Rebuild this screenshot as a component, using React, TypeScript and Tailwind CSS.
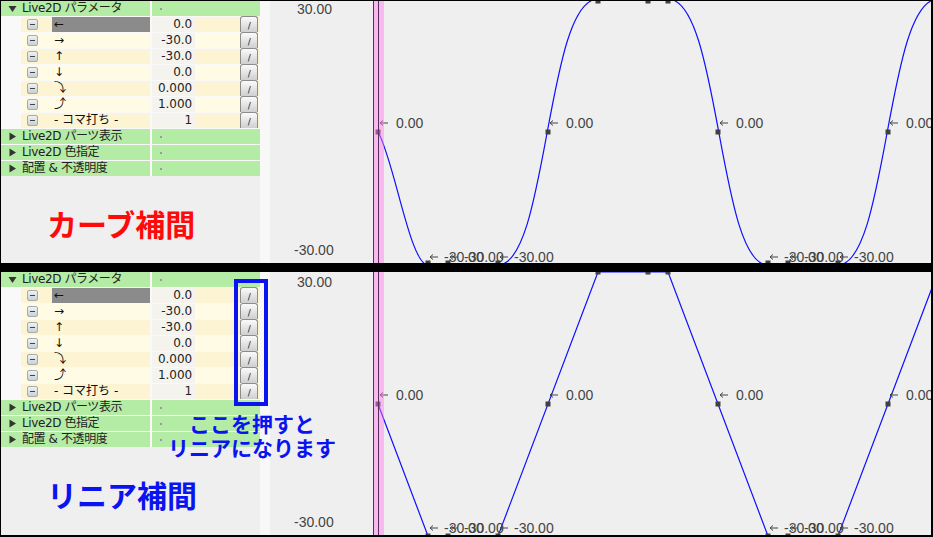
import React from 'react';

type Mode = 'curve' | 'linear';

const params = [
  { label: '←', value: '0.0' },
  { label: '→', value: '-30.0' },
  { label: '↑', value: '-30.0' },
  { label: '↓', value: '0.0' },
  { label: '⤵', value: '0.000' },
  { label: '⤴', value: '1.000' },
  { label: '- コマ打ち -', value: '1' },
];

const groups = ['Live2D パーツ表示', 'Live2D 色指定', '配置 & 不透明度'];

function Triangle({ open }: { open: boolean }) {
  return (
    <svg width="9" height="9" viewBox="0 0 9 9" className="ml-[7px] mr-[5px] shrink-0">
      {open ? <path d="M0.5 2 L8.5 2 L4.5 8 Z" fill="#333" /> : <path d="M1.5 0.5 L8 4.5 L1.5 8.5 Z" fill="#333" />}
    </svg>
  );
}

function GroupHeader({ title, open }: { title: string; open: boolean }) {
  return (
    <div className="mb-px flex h-[15px]">
      <div className="flex w-[150px] items-center bg-[#b4eba5]">
        <Triangle open={open} />
        <span className="whitespace-pre text-[12px] leading-[15px] text-[#222] font-['DejaVu_Sans','Noto_Sans_CJK_JP',sans-serif] tracking-[-0.4px]">
          {title}
        </span>
      </div>
      <div className="ml-[2px] flex w-[108px] items-center bg-[#b4eba5]">
        <div className="ml-[8px] h-[2px] w-[2px] bg-[#9a9a9a]" />
      </div>
    </div>
  );
}

function MinusBtn() {
  return (
    <div className="ml-[6px] flex h-[11px] w-[11px] shrink-0 items-center justify-center rounded-[2px] border border-[#a3acb2] bg-linear-to-b from-[#eef2f4] to-[#c9d1d6]">
      <div className="h-px w-[5px] bg-[#444]" />
    </div>
  );
}

function SlashBtn() {
  return (
    <div className="flex h-[16px] w-[18px] shrink-0 items-end justify-center rounded-t-[3px] border border-b-0 border-[#8c8c8c] bg-linear-to-b from-[#fbfbfb] to-[#cfcfcf] pb-[1px] text-[9px] leading-[10px] text-[#222] font-['DejaVu_Sans',sans-serif]">
      /
    </div>
  );
}

function ParamRow({ label, value, idx }: { label: string; value: string; idx: number }) {
  const bg = idx % 2 === 0 ? 'bg-[#fcf4d2]' : 'bg-[#fffbe5]';
  const selected = idx === 0;
  return (
    <div className="mb-px flex h-[15px]">
      <div className="w-[20px]" />
      <div className={`flex w-[130px] items-center ${bg}`}>
        <MinusBtn />
        <div
          className={`ml-[14px] flex h-full flex-1 items-center pl-[2px] text-[12px] leading-[15px] text-[#111] font-['DejaVu_Sans','Noto_Sans_CJK_JP',sans-serif] ${
            selected ? 'bg-[#8b8b8b]' : ''
          }`}
        >
          {label}
        </div>
      </div>
      <div className="ml-[2px] flex w-[43px] items-center justify-end bg-[#f4f3ee] pr-[3px] text-[12px] leading-[15px] text-[#222] font-['DejaVu_Sans',sans-serif]">
        {value}
      </div>
      <div className={`flex w-[65px] items-end ${bg}`}>
        <div className="w-[45px]" />
        <SlashBtn />
      </div>
    </div>
  );
}

function ParamTable() {
  return (
    <div className="bg-[#f9f9f9]">
      <GroupHeader title="Live2D パラメータ" open />
      {params.map((p, i) => (
        <ParamRow key={i} label={p.label} value={p.value} idx={i} />
      ))}
      {groups.map((g) => (
        <GroupHeader key={g} title={g} open={false} />
      ))}
    </div>
  );
}

// keyframe x positions in graph coords (graph starts at page x=270)
const keys = [
  { x: 108, v: 0 },
  { x: 158, v: -30 },
  { x: 178, v: -30 },
  { x: 228, v: -30 },
  { x: 278, v: 0 },
  { x: 328, v: 30 },
  { x: 378, v: 30 },
  { x: 398, v: 30 },
  { x: 448, v: 0 },
  { x: 498, v: -30 },
  { x: 518, v: -30 },
  { x: 568, v: -30 },
  { x: 618, v: 0 },
  { x: 668, v: 30 },
];

function Arrow({ x, y }: { x: number; y: number }) {
  return (
    <path
      d={`M${x + 2} ${y} L${x + 10} ${y} M${x + 2} ${y} L${x + 5} ${y - 2.5} M${x + 2} ${y} L${x + 5} ${y + 2.5}`}
      stroke="#444"
      strokeWidth="1"
      fill="none"
    />
  );
}

function Graph({ mode }: { mode: Mode }) {
  const linear = mode === 'linear';
  const mid = linear ? 132 : 131;
  const bot = linear ? 264 : 262;
  const yOf = (v: number) => (v === 0 ? mid : v > 0 ? 0 : bot);
  // plateaus drawn just past the panel edges, as in the editor
  const t = linear ? 0 : -2;
  const b = bot + 2;
  const path = linear
    ? `M108 ${mid} L158 ${bot} L228 ${bot} L328 0 L398 0 L498 ${bot} L568 ${bot} L668 0`
    : `M108 ${mid} C124 158 140 ${b} 158 ${b} L228 ${b} C278 ${b} 276 ${t} 328 ${t} L398 ${t} C450 ${t} 448 ${b} 498 ${b} L568 ${b} C618 ${b} 616 ${t} 668 ${t}`;
  const labelFont = { fontFamily: '"Liberation Sans", Arial, sans-serif', fontSize: 14 };
  const zeroBase = linear ? 128 : 127;
  const lowBase = 261;
  return (
    <svg width="661" height={linear ? 263 : 262} className="block" style={{ overflow: 'hidden' }}>
      <rect width="661" height="270" fill="#efefef" />
      <text x="27" y={linear ? 15 : 13} fill="#444" style={labelFont}>
        30.00
      </text>
      <text x="24" y={linear ? 255 : 254} fill="#444" style={labelFont}>
        -30.00
      </text>
      <path d={path} stroke="#1010ff" strokeWidth="1.2" fill="none" />
      {keys.map((k, i) => (
        <rect key={i} x={k.x - 2.5} y={yOf(k.v) - 2.5} width="5" height="5" fill="#404040" />
      ))}
      {keys
        .filter((k) => k.v === 0)
        .map((k, i) => (
          <g key={'z' + i}>
            <Arrow x={k.x} y={zeroBase - 5} />
            <text x={k.x + 18} y={zeroBase} fill="#444" style={labelFont}>
              0.00
            </text>
          </g>
        ))}
      {keys
        .filter((k) => k.v === -30)
        .map((k, i) => (
          <g key={'l' + i}>
            <Arrow x={k.x} y={lowBase - 5} />
            <text x={k.x + 16} y={lowBase} fill="#444" style={labelFont}>
              -30.00
            </text>
          </g>
        ))}
      <rect x="103" y="0" width="11" height="270" fill="#ff7af5" opacity="0.45" />
      <line x1="103.5" y1="0" x2="103.5" y2="270" stroke="#5c2c5c" strokeWidth="1" />
      <line x1="108.5" y1="0" x2="108.5" y2="270" stroke="#5c2c5c" strokeWidth="1" />
    </svg>
  );
}

function Panel({ mode }: { mode: Mode }) {
  const linear = mode === 'linear';
  return (
    <div className={`flex ${linear ? 'h-[263px]' : 'h-[262px]'} overflow-hidden`}>
      <div className="w-[259px] bg-[#efefef]">
        <ParamTable />
        <div
          className={`mt-[32px] pl-[46px] text-[30px] font-bold leading-[30px] font-['Noto_Sans_CJK_JP',sans-serif] ${
            linear ? 'text-[#0a14f0]' : 'text-[#ff0a0a]'
          }`}
        >
          {linear ? 'リニア補間' : 'カーブ補間'}
        </div>
      </div>
      <div className="w-[10px] bg-[#f8f8f8]" />
      <div className="flex-1">
        <Graph mode={mode} />
      </div>
    </div>
  );
}

export default function App() {
  return (
    <div className="relative h-[537px] w-[933px] overflow-hidden border-t border-l border-r-2 border-b-2 border-black bg-black">
      <Panel mode="curve" />
      <div className="h-[9px] bg-black" />
      <Panel mode="linear" />

      <div className="absolute left-[233px] top-[278px] h-[127px] w-[34px] border-4 border-[#0a14f0]" />
      <div className="absolute left-[150px] top-[410px] w-[202px] text-center text-[21px] font-bold leading-[24px] text-[#0a14f0] font-['Noto_Sans_CJK_JP',sans-serif]">
        ここを押すと
        <br />
        リニアになります
      </div>
    </div>
  );
}
